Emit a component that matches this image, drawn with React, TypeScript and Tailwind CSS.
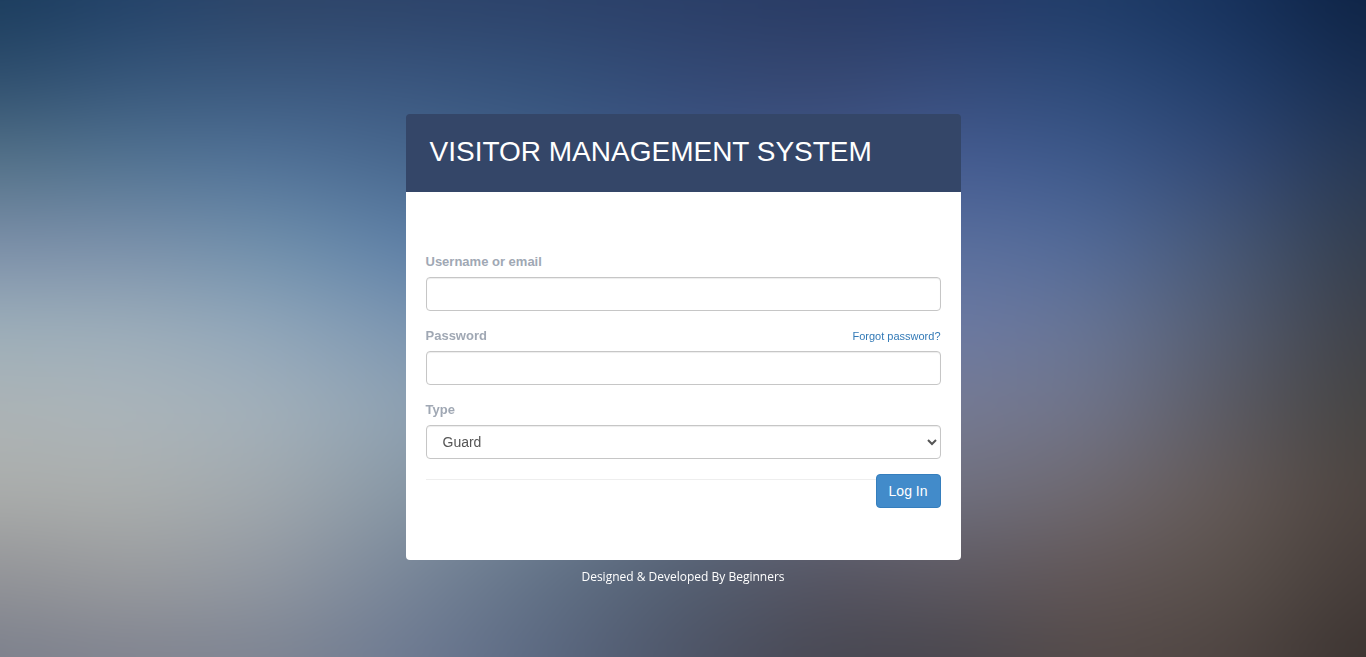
import React from "react";

// Colour mesh of the backdrop: each column lists its colours from top to bottom.
const COLUMNS: { x: number; colors: string[] }[] = [
  { x: 0, colors: ["#1b3c5d", "#30506f", "#557389", "#7c8fa9", "#9dafba", "#adb4b6", "#abadab", "#939498", "#7c808c"] },
  { x: 10, colors: ["#24436a", "#38587c", "#547594", "#7b91ab", "#9cadba", "#abb5bb", "#abafae", "#9a9c9f", "#818490"] },
  { x: 20, colors: ["#2e4568", "#3b597f", "#527399", "#7090ac", "#90a6ba", "#a2b0ba", "#a0a8ae", "#9198a2", "#7e8593"] },
  { x: 30, colors: ["#2d446a", "#3a567f", "#49698f", "#5f81a8", "#7c96b1", "#8fa2b3", "#8797a5", "#788699", "#6d7a92"] },
  { x: 40, colors: ["#2c426a", "#35527b", "#42608a", "#5375a0", "#6c88ab", "#7c90a8", "#74869a", "#627287", "#5a6881"] },
  { x: 50, colors: ["#2b3f68", "#344a76", "#405888", "#4e6a99", "#647ca5", "#70809c", "#687488", "#535f72", "#4e5568"] },
  { x: 60, colors: ["#293b64", "#374872", "#425789", "#52699a", "#667aa4", "#727d9a", "#6c7182", "#565563", "#484853"] },
  { x: 70, colors: ["#263b69", "#364c7b", "#465d93", "#5b709e", "#6d7aa3", "#777b93", "#70707f", "#5f5a62", "#4a474e"] },
  { x: 80, colors: ["#203d69", "#2e4b7a", "#3e5a8b", "#526a98", "#677595", "#707489", "#6f696f", "#625758", "#554b49"] },
  { x: 90, colors: ["#17325d", "#223e6b", "#344a76", "#475876", "#545c70", "#5b5a62", "#635956", "#5a514c", "#4f4542"] },
  { x: 100, colors: ["#0e2344", "#182d50", "#273853", "#333d4d", "#3e4047", "#454341", "#4c433f", "#453c39", "#3b3330"] },
];

function Backdrop() {
  return (
    <svg
      className="fixed inset-0 -z-10 h-full w-full"
      viewBox="0 0 100 100"
      preserveAspectRatio="none"
      aria-hidden="true"
    >
      <defs>
        <filter id="soften" filterUnits="userSpaceOnUse" x="-20" y="-20" width="140" height="140" colorInterpolationFilters="sRGB">
          <feGaussianBlur stdDeviation="3 4" />
        </filter>
        {COLUMNS.map(({ x, colors }, i) => (
          <React.Fragment key={x}>
            <linearGradient id={`column-${i}`} gradientUnits="userSpaceOnUse" x1="0" y1="0" x2="0" y2="100">
              {colors.map((color, row) => (
                <stop key={row} offset={row / (colors.length - 1)} stopColor={color} />
              ))}
            </linearGradient>
            {i > 0 && (
              <>
                <linearGradient id={`fade-${i}`} gradientUnits="userSpaceOnUse" x1={COLUMNS[i - 1].x} y1="0" x2={x} y2="0">
                  <stop offset="0" stopColor="#fff" stopOpacity="0" />
                  <stop offset="1" stopColor="#fff" stopOpacity="1" />
                </linearGradient>
                <mask id={`mask-${i}`} maskUnits="userSpaceOnUse" x="-20" y="-20" width="140" height="140">
                  <rect x="-20" y="-20" width="140" height="140" fill={`url(#fade-${i})`} />
                </mask>
              </>
            )}
          </React.Fragment>
        ))}
      </defs>
      <g filter="url(#soften)">
        {COLUMNS.map(({ x }, i) => (
          <rect
            key={x}
            x="-20"
            y="-20"
            width="140"
            height="140"
            fill={`url(#column-${i})`}
            mask={i > 0 ? `url(#mask-${i})` : undefined}
          />
        ))}
      </g>
    </svg>
  );
}

const labelClass = "text-[13px] leading-5 font-bold text-[#a0a8b4]";
const controlClass =
  "block h-[34px] w-full rounded border border-[#c6c6c6] bg-white px-3 text-sm text-[#555] shadow-[inset_0_1px_1px_rgba(0,0,0,0.075)] outline-none focus:border-[#66afe9]";

export default function App() {
  return (
    <div className="relative isolate flex min-h-screen flex-col items-center px-4 pt-[114px] font-['Liberation_Sans',Arial,sans-serif]">
      <Backdrop />
      <main className="w-full max-w-[555px] overflow-hidden rounded">
        <header className="bg-[#344668] px-6 pt-[18px] pb-5">
          <h1 className="text-[28px] leading-10 text-white">VISITOR MANAGEMENT SYSTEM</h1>
        </header>
        <form className="flex flex-col gap-[15px] bg-white px-5 pt-[60px] pb-[52px]" onSubmit={(e) => e.preventDefault()}>
          <div className="flex flex-col gap-[5px]">
            <label htmlFor="username" className={labelClass}>Username or email</label>
            <input id="username" type="text" className={controlClass} />
          </div>
          <div className="flex flex-col gap-[5px]">
            <div className="flex items-center justify-between">
              <label htmlFor="password" className={labelClass}>Password</label>
              <a href="#forgot" className="text-[11px] leading-5 text-[#337ab7]">Forgot password?</a>
            </div>
            <input id="password" type="password" className={controlClass} />
          </div>
          <div className="flex flex-col gap-[5px]">
            <label htmlFor="type" className={labelClass}>Type</label>
            <select id="type" className={controlClass}>
              <option>Guard</option>
              <option>Admin</option>
            </select>
          </div>
          <div className="flex items-start">
            <hr className="mt-[5px] flex-1 border-t border-[#eee]" />
            <button type="submit" className="h-[34px] rounded border border-[#357ebd] bg-[#428bca] px-3 text-sm text-white">
              Log In
            </button>
          </div>
        </form>
      </main>
      <footer className="py-[7px] text-center font-['Open_Sans',sans-serif] text-xs leading-5 text-white">
        Designed &amp; Developed By Beginners
      </footer>
    </div>
  );
}
